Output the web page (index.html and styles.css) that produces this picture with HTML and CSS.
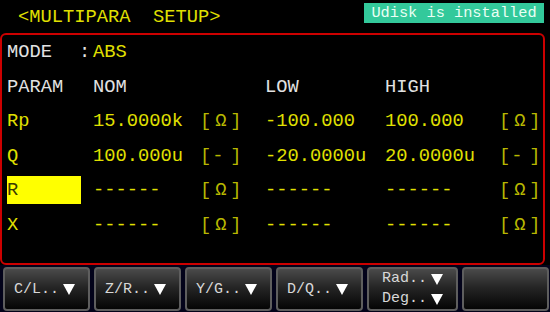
FILE: index.html
```html
<!DOCTYPE html>
<html lang="en">
<head>
  <meta charset="utf-8">
  <title>MULTIPARA SETUP</title>
  <link rel="stylesheet" href="styles.css">
</head>
<body>
  <div class="screen">
    <div class="topbar">
      <div class="title">&lt;MULTIPARA&nbsp;&nbsp;SETUP&gt;</div>
      <div class="udisk">Udisk is installed</div>
    </div>

    <div class="panel">
      <div class="row">
        <span class="lbl">MODE</span>
        <span class="mode"><span class="colon">:</span><span class="val">ABS</span></span>
      </div>
      <div class="row">
        <span class="lbl">PARAM</span>
        <span class="lbl">NOM</span>
        <span></span>
        <span class="lbl">LOW</span>
        <span class="lbl">HIGH</span>
        <span></span>
      </div>
      <div class="row">
        <span class="val">Rp</span>
        <span class="val">15.0000k</span>
        <span class="unit">[<i>Ω</i>]</span>
        <span class="val">-100.000</span>
        <span class="val">100.000</span>
        <span class="unit">[<i>Ω</i>]</span>
      </div>
      <div class="row">
        <span class="val">Q</span>
        <span class="val">100.000u</span>
        <span class="unit">[<i class="left">-</i>]</span>
        <span class="val">-20.0000u</span>
        <span class="val">20.0000u</span>
        <span class="unit">[<i class="left">-</i>]</span>
      </div>
      <div class="row">
        <span class="val"><span class="cursor">R</span></span>
        <span class="val">------</span>
        <span class="unit">[<i>Ω</i>]</span>
        <span class="val">------</span>
        <span class="val">------</span>
        <span class="unit">[<i>Ω</i>]</span>
      </div>
      <div class="row">
        <span class="val">X</span>
        <span class="val">------</span>
        <span class="unit">[<i>Ω</i>]</span>
        <span class="val">------</span>
        <span class="val">------</span>
        <span class="unit">[<i>Ω</i>]</span>
      </div>
    </div>

    <div class="softkeys">
      <div class="key">C/L..<b class="tri"></b></div>
      <div class="key">Z/R..<b class="tri"></b></div>
      <div class="key">Y/G..<b class="tri"></b></div>
      <div class="key">D/Q..<b class="tri"></b></div>
      <div class="key two">
        <div class="line">Rad..<b class="tri"></b></div>
        <div class="line">Deg..<b class="tri"></b></div>
      </div>
      <div class="key"></div>
    </div>
  </div>
</body>
</html>
```

FILE: styles.css
```css
body {
  margin: 0;
  padding: 0;
  background-color: #000000;
  font-family: "Liberation Mono", "DejaVu Sans Mono", monospace;
}

.screen {
  width: 550px;
  height: 312px;
  overflow: hidden;
  display: flex;
  flex-direction: column;
}

.topbar {
  height: 33px;
  display: flex;
  justify-content: space-between;
  align-items: flex-start;
}

.title {
  color: #e0e000;
  font-size: 18.75px;
  padding-left: 18px;
  line-height: 34px;
}

.udisk {
  margin-top: 3px;
  margin-right: 6px;
  width: 180px;
  height: 20px;
  background-color: #33c99b;
  color: #eafff4;
  font-size: 15.3px;
  line-height: 20px;
  text-align: center;
}

.panel {
  height: 229px;
  margin-right: 5px;
  border: 2px solid #cc0000;
  border-radius: 6px;
  padding-left: 5px;
}

.row {
  display: grid;
  grid-template-columns: 86px 110px 62px 120px 117px 1fr;
  align-items: center;
  height: 34.5px;
  font-size: 18.75px;
}

.lbl {
  color: #e2e2e2;
}

.val {
  color: #e0e000;
}

.mode {
  grid-column: 2 / span 3;
  margin-left: -14px;
  display: flex;
}

.colon {
  color: #e2e2e2;
  width: 14px;
}

.unit {
  color: #b8b800;
  display: flex;
  align-items: center;
  margin-left: -3px;
}

.unit i {
  font-style: normal;
  width: 19px;
  text-align: center;
}

.unit i.left {
  text-align: left;
  padding-left: 1px;
  width: 18px;
}

.cursor {
  display: inline-block;
  width: 74px;
  height: 28px;
  line-height: 28px;
  background-color: #ffff00;
  color: #3a3a00;
}

.softkeys {
  flex: 1;
  display: flex;
  gap: 4px;
  padding: 2px 1px 1px 3px;
  background-color: #03031a;
}

.key {
  flex: 1;
  border: 2px solid #5e5e5e;
  border-radius: 4px;
  background: linear-gradient(#4a4a4a, #262626 45%, #050505);
  color: #d8d8d8;
  font-size: 15px;
  display: flex;
  align-items: center;
  padding-left: 9px;
}

.key.two {
  flex-direction: column;
  align-items: flex-start;
  justify-content: center;
  line-height: 20px;
  padding-left: 13px;
}

.line {
  display: flex;
  align-items: center;
}

.tri {
  width: 0;
  height: 0;
  margin-left: 4px;
  border-left: 6px solid transparent;
  border-right: 6px solid transparent;
  border-top: 11px solid #ffffff;
}
```
